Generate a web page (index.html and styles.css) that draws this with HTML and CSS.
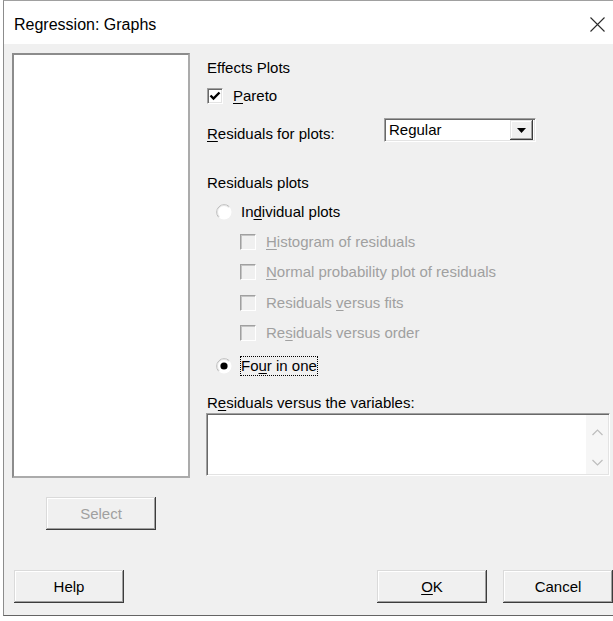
FILE: index.html
```html
<!DOCTYPE html>
<html>
<head>
<meta charset="utf-8">
<title>Regression: Graphs</title>
<link rel="stylesheet" href="styles.css">
</head>
<body>
<div class="window">
  <div class="titlebar">
    <span class="title">Regression: Graphs</span>
    <svg class="close" width="15" height="15" viewBox="0 0 15 15"><path d="M0.5 0.5L14.5 14.5M14.5 0.5L0.5 14.5" stroke="#2b2b2b" stroke-width="1.1" fill="none"/></svg>
  </div>
  <div class="client">
    <div class="main">
      <div class="leftcol">
        <div class="listbox"></div>
        <button class="btn btn-select" disabled>Select</button>
      </div>
      <div class="rightcol">
        <div class="row r-effects">Effects Plots</div>
        <div class="row r-pareto">
          <span class="cb"><svg width="12" height="12" viewBox="0 0 12 12"><path d="M1.5 5.5L4.5 8.5L10.5 2.5" stroke="#000" stroke-width="2.4" fill="none"/></svg></span>
          <span><u>P</u>areto</span>
        </div>
        <div class="row-combo">
          <span class="combo-label"><u>R</u>esiduals for plots:</span>
          <div class="combo">
            <span class="combo-text">Regular</span>
            <span class="combo-btn"><svg width="9" height="5" viewBox="0 0 9 5"><path d="M0 0H9L4.5 5Z" fill="#000"/></svg></span>
          </div>
        </div>
        <div class="row r-resplots">Residuals plots</div>
        <div class="row radio-row r-individual">
          <svg class="radio" width="16" height="16" viewBox="0 0 16 16"><circle cx="8" cy="8" r="7.5" fill="#fff"/><path d="M2.7 13.3A7.5 7.5 0 0 1 13.3 2.7" stroke="#b9b9b9" fill="none"/><path d="M3.4 12.6A6.5 6.5 0 0 1 12.6 3.4" stroke="#e2e2e2" fill="none"/></svg>
          <span>In<u>d</u>ividual plots</span>
        </div>
        <div class="row sub-row r-hist"><span class="cb cb-dis"></span><span><u>H</u>istogram of residuals</span></div>
        <div class="row sub-row r-normal"><span class="cb cb-dis"></span><span><u>N</u>ormal probability plot of residuals</span></div>
        <div class="row sub-row r-fits"><span class="cb cb-dis"></span><span>Residuals <u>v</u>ersus fits</span></div>
        <div class="row sub-row r-order"><span class="cb cb-dis"></span><span>Re<u>s</u>iduals versus order</span></div>
        <div class="row radio-row r-four">
          <svg class="radio" width="16" height="16" viewBox="0 0 16 16"><circle cx="8" cy="8" r="7.5" fill="#fff"/><path d="M2.7 13.3A7.5 7.5 0 0 1 13.3 2.7" stroke="#b9b9b9" fill="none"/><path d="M3.4 12.6A6.5 6.5 0 0 1 12.6 3.4" stroke="#e2e2e2" fill="none"/><circle cx="8" cy="8" r="3.6" fill="#000"/></svg>
          <span class="focus">Fo<u>u</u>r in one</span>
        </div>
        <div class="row r-vars">R<u>e</u>siduals versus the variables:</div>
        <div class="varbox">
          <div class="scroll">
            <svg width="11" height="7" viewBox="0 0 11 7"><path d="M0.5 6L5.5 1L10.5 6" stroke="#bdbdbd" stroke-width="1.2" fill="none"/></svg>
            <svg width="11" height="7" viewBox="0 0 11 7"><path d="M0.5 1L5.5 6L10.5 1" stroke="#bdbdbd" stroke-width="1.2" fill="none"/></svg>
          </div>
        </div>
      </div>
    </div>
    <div class="footer">
      <button class="btn">Help</button>
      <button class="btn btn-ok"><u>O</u>K</button>
      <button class="btn btn-cancel">Cancel</button>
    </div>
  </div>
</div>
</body>
</html>
```
FILE: styles.css
```css
* { box-sizing: border-box; }
html, body { margin: 0; padding: 0; background: #fff; overflow: hidden; }
body {
  font-family: "Liberation Sans", Arial, sans-serif;
  font-size: 15px;
  color: #000;
}
u { text-decoration: underline; text-underline-offset: 2px; }

.window {
  margin-left: 3px;
  width: 610px;
  height: 616px;
  border-top: 1px solid #a0a0a0;
  border-left: 1px solid #8c8c8c;
  border-bottom: 1px solid #646464;
  display: flex;
  flex-direction: column;
}

.titlebar {
  height: 43px;
  background: #fff;
  display: flex;
  align-items: center;
  justify-content: space-between;
  padding: 4px 8px 0 10px;
}
.title { font-size: 16px; }
.close { display: block; }

.client {
  flex: 1;
  background: #f0f0f0;
  display: flex;
  flex-direction: column;
}
.main { display: flex; align-items: flex-start; }

.leftcol {
  padding: 9px 0 0 8px;
  display: flex;
  flex-direction: column;
  align-items: flex-start;
}
.listbox {
  width: 178px;
  height: 425px;
  background: #fff;
  border: 2px solid;
  border-color: #8c8c8c #ababab #ababab #8c8c8c;
}

.btn {
  font-family: inherit;
  font-size: 15px;
  color: #000;
  width: 110px;
  height: 33px;
  padding: 0;
  background: #f0f0f0;
  border: none;
  box-shadow: inset -1px -1px #3c3c3c, inset 1px 1px #dadada, inset -2px -2px #a0a0a0, inset 2px 2px #fff;
}
.btn-select { margin: 19px 0 0 34px; color: #a0a0a0; }

.rightcol {
  padding: 14px 0 0 17px;
  display: flex;
  flex-direction: column;
  width: 406px;
}
.row {
  display: flex;
  align-items: center;
  height: 20px;
  line-height: 20px;
  white-space: nowrap;
}
.r-pareto { margin-top: 8px; }
.r-resplots { margin-top: 31px; }
.r-individual { margin-top: 9px; }
.r-hist { margin-top: 10px; }
.r-normal { margin-top: 10px; }
.r-fits { margin-top: 11px; }
.r-order { margin-top: 10px; }
.r-four { margin-top: 13px; }
.r-vars { margin-top: 17px; }

.cb {
  width: 16px;
  height: 16px;
  margin-right: 10px;
  background: #fff;
  border: 1px solid;
  border-color: #a0a0a0 #fff #fff #a0a0a0;
  box-shadow: inset 1px 1px #696969, inset -1px -1px #e3e3e3;
  display: flex;
  align-items: center;
  justify-content: center;
}
.cb-dis {
  background: #f0f0f0;
  box-shadow: inset 1px 1px #c4c4c4, inset -1px -1px #f0f0f0;
}
.sub-row { padding-left: 33px; color: #a0a0a0; }

.radio-row { padding-left: 9px; }
.radio { margin-right: 9px; display: block; }
.focus { outline: 1px dotted #000; line-height: 18px; }

.row-combo {
  margin-top: 12px;
  height: 24px;
  display: flex;
  align-items: flex-start;
}
.combo-label {
  width: 177px;
  margin-top: 6px;
  line-height: 20px;
  white-space: nowrap;
}
.combo {
  width: 152px;
  height: 24px;
  background: #fff;
  border: 1px solid;
  border-color: #a0a0a0 #fff #fff #a0a0a0;
  box-shadow: inset 1px 1px #696969, inset -1px -1px #e3e3e3;
  padding: 1px 2px 1px 1px;
  display: flex;
}
.combo-text { flex: 1; padding-left: 3px; line-height: 19px; }
.combo-btn {
  width: 23px;
  height: 20px;
  background: #f0f0f0;
  box-shadow: inset -1px -1px #3c3c3c, inset 1px 1px #e3e3e3, inset -2px -2px #a0a0a0, inset 2px 2px #fff;
  display: flex;
  align-items: center;
  justify-content: center;
}

.varbox {
  margin-left: -1px;
  width: 404px;
  height: 63px;
  background: #fff;
  border: 1px solid;
  border-color: #a0a0a0 #fff #fff #a0a0a0;
  box-shadow: inset 1px 1px #696969, inset -1px -1px #e3e3e3;
  padding: 1px;
  display: flex;
  justify-content: flex-end;
}
.scroll {
  width: 22px;
  background: #f6f6f6;
  display: flex;
  flex-direction: column;
  justify-content: space-between;
  align-items: center;
  padding: 14px 0 8px 0;
}
.scroll svg { display: block; }

.footer {
  margin-top: auto;
  display: flex;
  padding: 0 0 12px 10px;
}
.btn-ok { margin-left: 253px; }
.btn-cancel { margin-left: 16px; }
```
